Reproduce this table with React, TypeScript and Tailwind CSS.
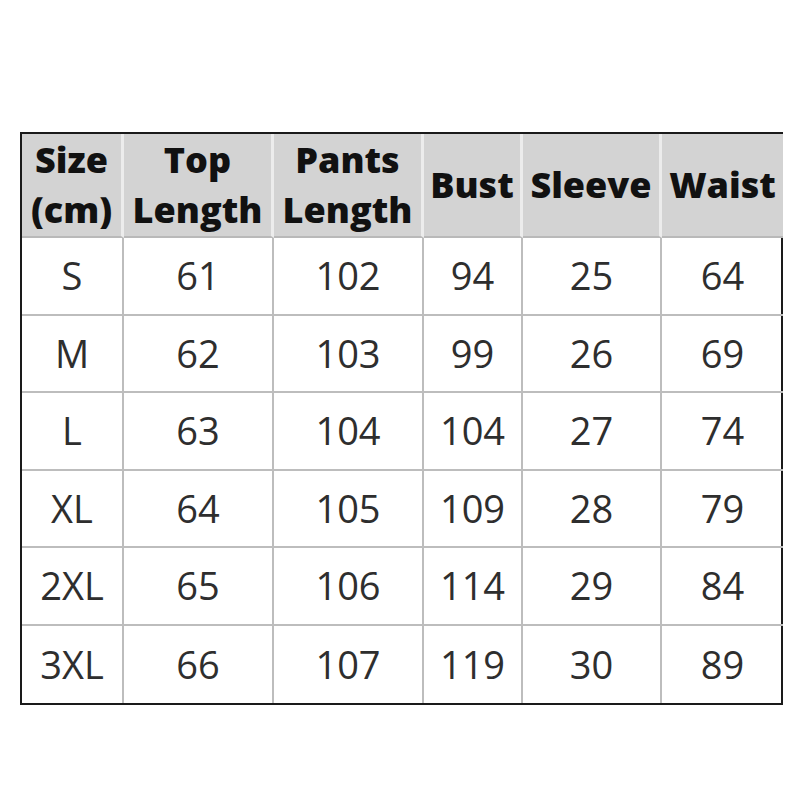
import React from "react";

const headers: string[][] = [
  ["Size", "(cm)"],
  ["Top", "Length"],
  ["Pants", "Length"],
  ["Bust"],
  ["Sleeve"],
  ["Waist"],
];

const rows: string[][] = [
  ["S", "61", "102", "94", "25", "64"],
  ["M", "62", "103", "99", "26", "69"],
  ["L", "63", "104", "104", "27", "74"],
  ["XL", "64", "105", "109", "28", "79"],
  ["2XL", "65", "106", "114", "29", "84"],
  ["3XL", "66", "107", "119", "30", "89"],
];

export default function App() {
  return (
    <div className="w-[800px] h-[800px] bg-white pt-[132px] pl-[20px]" style={{ fontFamily: '"Open Sans", "Noto Sans", sans-serif' }}>
      <div className="w-[763px] border-[2.5px] border-[#1a1a1a]">
        <div className="grid grid-cols-[102px_150px_150px_99px_139px_121px]">
          {headers.map((h, i) => (
            <div
              key={i}
              className={`h-[104px] bg-[#d3d3d3] flex flex-col items-center justify-center text-[36px] font-extrabold leading-[50px] text-[#111] border-b-2 border-[#b9b9b9] ${i < 5 ? "border-r-[3px] border-r-[#ececec]" : ""}`}
            >
              {h.map((t, j) => (
                <span key={j} className="whitespace-nowrap">{t}</span>
              ))}
            </div>
          ))}
          {rows.map((r, ri) =>
            r.map((c, ci) => (
              <div
                key={`${ri}-${ci}`}
                className={`h-[77.5px] flex items-center justify-center text-[38px] text-[#2e2e2e] ${ci < 5 ? "border-r-2 border-r-[#bdbdbd]" : ""} ${ri < 5 ? "border-b-2 border-b-[#bdbdbd]" : ""}`}
              >
                {c}
              </div>
            ))
          )}
        </div>
      </div>
    </div>
  );
}
